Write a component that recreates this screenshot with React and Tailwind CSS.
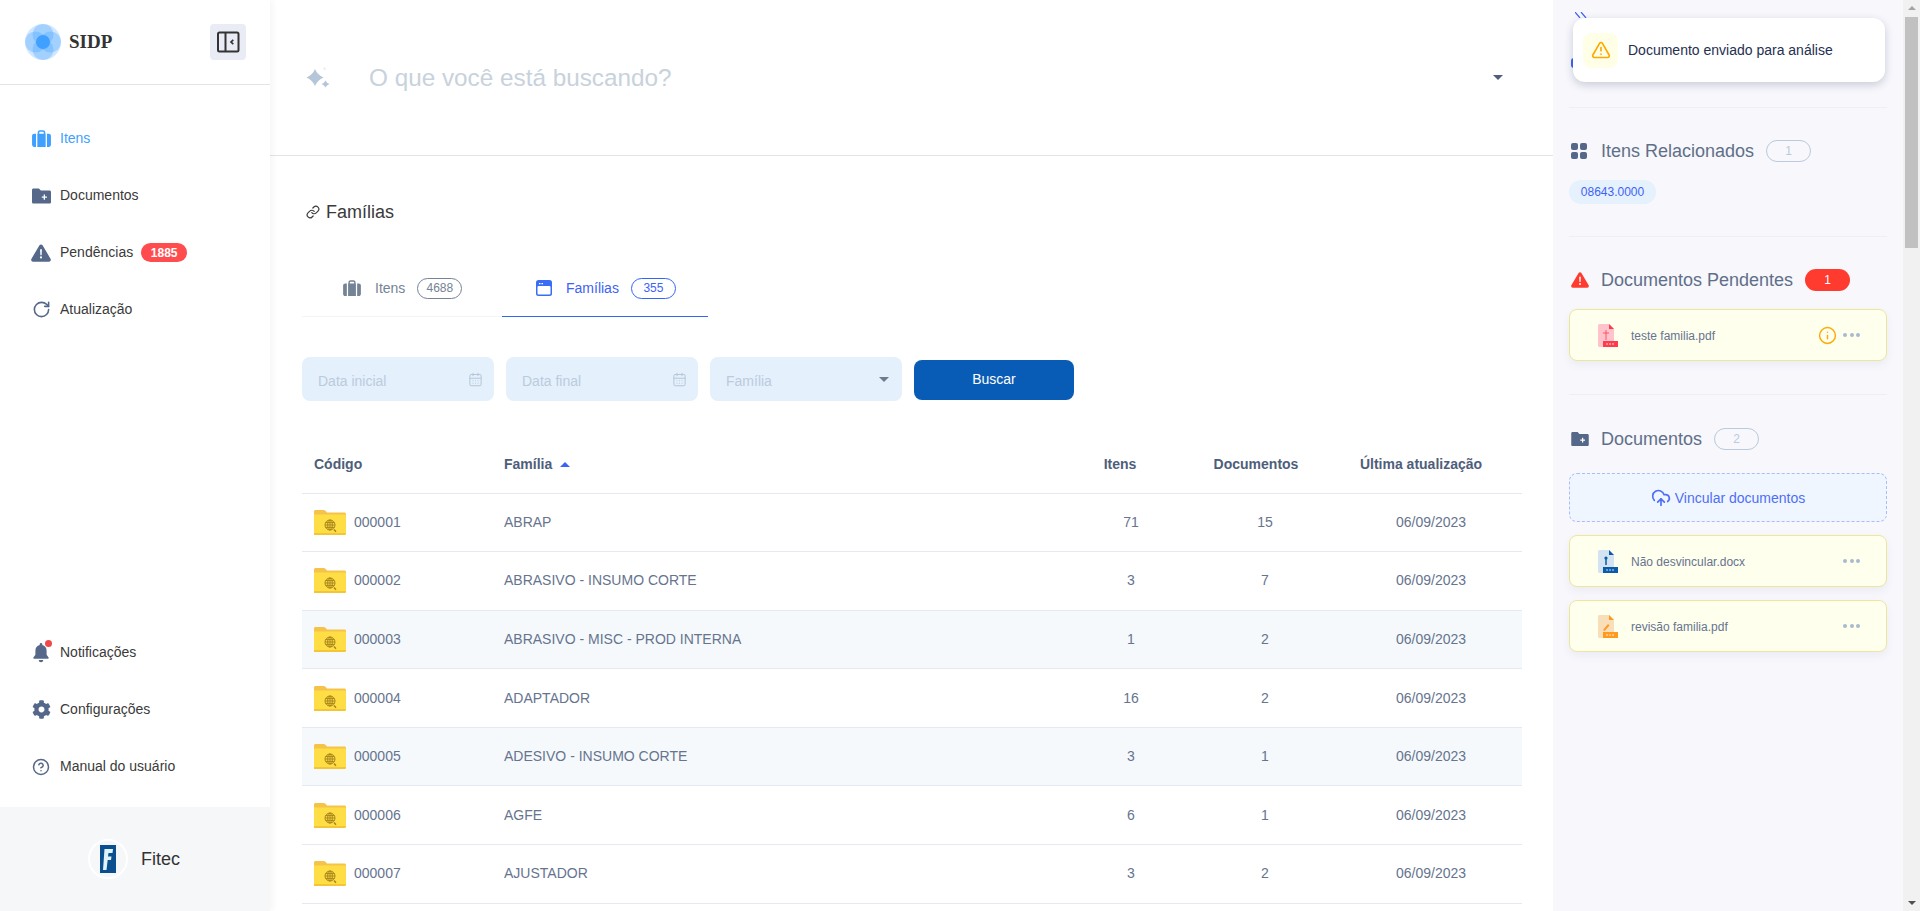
import React from 'react';
import { RotateCw, CircleHelp, Link, CalendarDays, TriangleAlert, Info, CloudUpload } from 'lucide-react';
import { FaCog } from 'react-icons/fa';

const SANS = "font-['Liberation_Sans',Arial,sans-serif]";

const rows = [
  { code: '000001', name: 'ABRAP', items: 71, docs: 15 },
  { code: '000002', name: 'ABRASIVO - INSUMO CORTE', items: 3, docs: 7 },
  { code: '000003', name: 'ABRASIVO - MISC - PROD INTERNA', items: 1, docs: 2, shaded: true },
  { code: '000004', name: 'ADAPTADOR', items: 16, docs: 2 },
  { code: '000005', name: 'ADESIVO - INSUMO CORTE', items: 3, docs: 1, shaded: true },
  { code: '000006', name: 'AGFE', items: 6, docs: 1 },
  { code: '000007', name: 'AJUSTADOR', items: 3, docs: 2 },
];

const BagIcon = ({ className }) => (
  <svg viewBox="0 0 20 18" className={className} fill="currentColor">
    <path d="M6 4V2.600C6 1.200 7 .3 8.300 .3h3.400C13 .3 14 1.200 14 2.600V4h.4v14H5.600V4H6zm1.600 0h4.800V2.700c0-.5-.3-.8-.8-.8H8.400c-.5 0-.8 .3-.8 .8V4z" />
    <path d="M4.200 4v14H2.400C1.100 18 0 17 0 15.700V6.300C0 5 1.100 4 2.400 4h1.800zM15.800 4h1.800C18.900 4 20 5 20 6.300v9.400c0 1.300-1.100 2.300-2.400 2.300h-1.800V4z" />
  </svg>
);

const FolderPlusIcon = ({ className }) => (
  <svg viewBox="0 0 20 16" className={className}>
    <path fill="currentColor" d="M1.500 0h5.800l2 2.200h9.200c.8 0 1.500 .7 1.500 1.500v10.800c0 .8-.7 1.500-1.500 1.500h-17C.7 16 0 15.300 0 14.500v-13C0 .7 .7 0 1.500 0z" />
    <path fill="#fff" d="M12.300 6.500h1.400v2h2v1.400h-2v2h-1.400v-2h-2V8.500h2z" />
  </svg>
);

const WarnIcon = ({ className }) => (
  <svg viewBox="0 0 22 19" className={className}>
    <path fill="currentColor" d="M9.300 1C10 -.2 12 -.2 12.700 1l8.900 15c.7 1.300-.2 3-1.700 3H2.100C.6 19-.3 17.300 .4 16L9.300 1z" />
    <path fill="#fff" d="M10 5.500h2l-.3 6.500h-1.400L10 5.500zM11 13.200a1.200 1.200 0 1 1 0 2.400 1.200 1.200 0 0 1 0-2.400z" />
  </svg>
);

const BellIcon = () => (
  <span className="relative block h-[20px] w-[20px]">
    <svg viewBox="0 0 16 20" className="absolute left-[2px] top-0 h-[20px] w-[16px] text-[#56688a]" fill="currentColor">
      <path d="M8 0c.8 0 1.300 .6 1.300 1.300v.6C12 2.500 13.600 4.700 13.600 7.400v4.400l2 2.700c.4 .5 0 1.200-.6 1.200H1c-.6 0-1-.7-.6-1.200l2-2.700V7.400C2.400 4.700 4 2.500 6.700 1.900v-.6C6.700 .6 7.200 0 8 0zM5.800 17h4.400c0 1.300-1 2.300-2.200 2.300S5.800 18.300 5.800 17z" />
    </svg>
    <span className="absolute left-[14px] top-[-3px] h-[7px] w-[7px] rounded-full bg-[#f04848]" />
  </span>
);

const SidebarToggleIcon = () => (
  <svg viewBox="0 0 24 24" className="h-[24px] w-[24px] text-[#333]" fill="none" stroke="currentColor" strokeWidth="2">
    <rect x="2" y="2.500" width="20.500" height="19" rx="1.500" />
    <path d="M9.500 2.500v19" />
    <path d="M17.300 9.800L15 12l2.300 2.200" strokeWidth="1.700" />
  </svg>
);

const LogoIcon = () => (
  <svg viewBox="0 0 36 36" className="h-[36px] w-[36px]">
    <circle cx="18" cy="18" r="18" fill="#3fa0ff" opacity=".25" />
    <circle cx="10.500" cy="18" r="10.500" fill="#3fa0ff" opacity=".3" />
    <circle cx="25.500" cy="18" r="10.500" fill="#3fa0ff" opacity=".3" />
    <circle cx="18" cy="10.500" r="10.500" fill="#3fa0ff" opacity=".3" />
    <circle cx="18" cy="25.500" r="10.500" fill="#3fa0ff" opacity=".3" />
    <circle cx="18" cy="18" r="7" fill="#3fa0ff" />
  </svg>
);

const FitecLogo = () => (
  <span className="flex h-[40px] w-[40px] items-center justify-center rounded-full border-2 border-white">
    <svg viewBox="0 0 16 28" className="h-[28px] w-[16px]">
      <rect width="16" height="28" fill="#0b4f8e" />
      <path d="M4.500 4H13l-.5 4H8.500L8 11.500h3.500L11 15H7.700L6.500 25H3z" fill="#dff3fb" />
    </svg>
  </span>
);

const SparkIcon = () => (
  <svg viewBox="0 0 24 24" className="h-[24px] w-[24px]" fill="#b4c6d8">
    <path d="M9 3Q11.500 9 17.500 11.500Q11.500 14 9 20Q6.500 14 .5 11.500Q6.500 9 9 3z" />
    <path d="M19.500 14.500Q20.500 17 23.500 18Q20.500 19 19.500 21.500Q18.500 19 15.500 18Q18.500 17 19.500 14.500z" />
    <path d="M18.500 .5c.2 1.300 .8 1.900 2.200 2.200-1.400 .3-2 .9-2.200 2.200-.2-1.300-.8-1.900-2.200-2.200 1.400-.3 2-.9 2.200-2.200z" opacity=".3" />
  </svg>
);

const WindowIcon = () => (
  <svg viewBox="0 0 16 16" className="h-[16px] w-[16px]">
    <rect width="16" height="16" rx="2.500" fill="#3a6cf6" />
    <rect x="1.500" y="6" width="13" height="8.500" rx="1" fill="#fff" />
    <path d="M3 3h1.500v1.200H3zM5.500 3H7v1.200H5.500z" fill="#fff" />
  </svg>
);

const FolderWebIcon = () => (
  <svg viewBox="0 0 32 25" className="h-[25px] w-[32px] shrink-0">
    <path fill="#f5c34b" d="M0 1.500C0 .7 .7 0 1.500 0h8.300c.6 0 1 .2 1.400 .6L13 2.500h17.500c.8 0 1.500 .7 1.500 1.500v4H0z" />
    <path fill="#ffdd45" d="M0 4.500h30.500c.8 0 1.500 .7 1.500 1.500v17.500c0 .8-.7 1.500-1.500 1.500H0z" />
    <path fill="#f4c636" d="M0 23h32v.5c0 .8-.7 1.500-1.500 1.500H0z" />
    <g fill="none" stroke="#a8871c" strokeWidth="1">
      <circle cx="16" cy="15" r="5" />
      <ellipse cx="16" cy="15" rx="2.300" ry="5" />
      <path d="M11 15h10M11.600 12.600h8.800M11.600 17.400h8.800M16 10v10" />
      <path d="M20 19.500l2 2.300" strokeWidth="1.500" />
    </g>
  </svg>
);

// page, folded corner and the coloured type tag of a document
const FileIcon = ({ page, tag, children }) => (
  <svg viewBox="0 0 20 23" className="h-[23px] w-[20px] shrink-0">
    <path fill={page} d="M1.500 0H11l5 5v16.500c0 .8-.7 1.500-1.500 1.500h-13C.7 23 0 22.300 0 21.500v-20C0 .7 .7 0 1.500 0z" />
    <path fill={tag} d="M11 0l5 5h-5z" />
    {children}
    <rect x="5" y="17" width="15" height="6" fill={tag} />
    <path d="M8.500 19h1v2h-1zM11.500 19h1v2h-1zM14.500 19h1v2h-1z" fill="#fff" opacity=".8" />
  </svg>
);

const Dots = () => (
  <span className="flex gap-[2.500px]">
    <i className="h-[4px] w-[4px] rounded-full bg-[#a8bacb]" />
    <i className="h-[4px] w-[4px] rounded-full bg-[#a8bacb]" />
    <i className="h-[4px] w-[4px] rounded-full bg-[#a8bacb]" />
  </span>
);

const NavItem = ({ icon, label, active, badge }) => (
  <div className={`flex h-[57px] items-center gap-[9px] pl-[31px] text-[14px] ${active ? 'text-[#3fa0ff]' : 'text-[#3a3a3a]'}`}>
    <span className={`flex h-[20px] w-[20px] items-center justify-center ${active ? 'text-[#3fa0ff]' : 'text-[#56688a]'}`}>{icon}</span>
    <span>{label}</span>
    {badge && <span className="ml-[-1px] flex h-[19px] w-[46px] items-center justify-center rounded-full bg-[#ff4d4f] text-[12px] font-bold text-white">{badge}</span>}
  </div>
);

const Sidebar = () => (
  <aside className="relative z-10 flex w-[270px] shrink-0 flex-col bg-white shadow-[3px_0_6px_rgba(0,0,0,0.04)]">
    <div className="flex h-[85px] items-center justify-between border-b border-[#e2e4e8] pl-[25px] pr-[24px]">
      <div className="flex items-center gap-[8px]">
        <LogoIcon />
        <span className="font-['Liberation_Serif',serif] text-[19px] font-bold text-[#333]">SIDP</span>
      </div>
      <button className="flex h-[36px] w-[36px] items-center justify-center rounded bg-[#e9ecf5]">
        <SidebarToggleIcon />
      </button>
    </div>
    <nav className="mt-[25px]">
      <NavItem active label="Itens" icon={<BagIcon className="h-[17px] w-[19px]" />} />
      <NavItem label="Documentos" icon={<FolderPlusIcon className="h-[16px] w-[19px]" />} />
      <NavItem label="Pendências" badge="1885" icon={<WarnIcon className="h-[18px] w-[21px]" />} />
      <NavItem label="Atualização" icon={<RotateCw size={19} strokeWidth={2} />} />
    </nav>
    <div className="flex-1" />
    <nav className="mb-[12px]">
      <NavItem label="Notificações" icon={<BellIcon />} />
      <NavItem label="Configurações" icon={<FaCog size={19} />} />
      <NavItem label="Manual do usuário" icon={<CircleHelp size={18} strokeWidth={2} />} />
    </nav>
    <div className="flex h-[104px] items-center justify-center gap-[13px] bg-[#f6f7f9] pr-[2px] text-[18px] text-[#333]">
      <FitecLogo />
      <span>Fitec</span>
    </div>
  </aside>
);

const Tab = ({ icon, label, count, active, className }) => (
  <div className={`flex h-[57px] items-center border-b text-[14px] ${className} ${active ? 'border-[#3366f5] text-[#3d63f5]' : 'border-[#f2f4f7] text-[#748395]'}`}>
    {icon}
    <span className="ml-[14px]">{label}</span>
    <span className={`ml-[12px] flex h-[21px] w-[45px] items-center justify-center rounded-full border text-[12px] ${active ? 'border-[#3366f5]' : 'border-[#748395]'}`}>{count}</span>
  </div>
);

const DateField = ({ label }) => (
  <div className="flex h-[44px] w-[192px] items-center justify-between rounded-lg bg-[#e4f0fc] pl-[16px] pr-[11px] text-[14px] text-[#bccbdc]">
    <span className="pt-[4px]">{label}</span>
    <CalendarDays size={15} strokeWidth={1.600} className="text-[#b5c6d6]" />
  </div>
);

const Main = () => (
  <main className="flex w-[1283px] shrink-0 flex-col bg-white">
    <div className="flex h-[156px] items-center border-b border-[#e2e4e8] pl-[36px] pr-[50px]">
      <SparkIcon />
      <span className="ml-[39px] pt-[1px] text-[24.300px] text-[#c8d2dc]">O que você está buscando?</span>
      <span className="ml-auto h-0 w-0 border-x-[5px] border-t-[5px] border-x-transparent border-t-[#4e5f7d]" />
    </div>
    <div className="pl-[32px] pr-[30px]">
      <div className="mt-[44px] flex h-[24px] items-center gap-[6px] pl-[4px] text-[18px] text-[#3a3a3a]">
        <Link size={14} strokeWidth={2} />
        <span>Famílias</span>
      </div>
      <div className="mt-[36px] flex">
        <Tab className="w-[200px] pl-[41px]" label="Itens" count="4688" icon={<BagIcon className="h-[16px] w-[18px]" />} />
        <Tab className="w-[206px] pl-[34px]" active label="Famílias" count="355" icon={<WindowIcon />} />
      </div>
      <div className="mt-[40px] flex items-center gap-[12px]">
        <DateField label="Data inicial" />
        <DateField label="Data final" />
        <div className="flex h-[44px] w-[192px] items-center justify-between rounded-lg bg-[#e4f0fc] pl-[16px] pr-[13px] text-[14px] text-[#bccbdc]">
          <span className="pt-[4px]">Família</span>
          <span className="h-0 w-0 border-x-[5px] border-t-[5px] border-x-transparent border-t-[#6f7b8c]" />
        </div>
        <button className="mt-[1px] h-[40px] w-[160px] rounded-lg bg-[#095cb5] text-[14px] text-white">Buscar</button>
      </div>
      <table className="mt-[35px] w-[1220px] table-fixed border-collapse text-[14px] text-[#66748e]">
        <colgroup>
          <col className="w-[190px]" />
          <col className="w-[572px]" />
          <col className="w-[132px]" />
          <col className="w-[138px]" />
          <col className="w-[188px]" />
        </colgroup>
        <thead>
          <tr className="h-[57px] border-b border-[#e6e9f2] font-bold text-[#4e5e7a]">
            <th className="pl-[12px] pt-[1px] text-left">Código</th>
            <th className="pl-[12px] pt-[1px] text-left">
              Família
              <span className="ml-[8px] inline-block h-0 w-0 -translate-y-[2px] border-x-[5px] border-b-[5px] border-x-transparent border-b-[#3d63f5]" />
            </th>
            <th className="pr-[20px] pt-[1px] text-center">Itens</th>
            <th className="pr-[18px] pt-[1px] text-center">Documentos</th>
            <th className="pr-[14px] pt-[1px] text-center">Última atualização</th>
          </tr>
        </thead>
        <tbody>
          {rows.map((row) => (
            <tr key={row.code} className={`h-[58.600px] border-b border-[#e6e9f2] ${row.shaded ? 'bg-[#f5f9fc]' : ''}`}>
              <td className="pl-[12px]">
                <div className="flex items-center gap-[8px]">
                  <FolderWebIcon />
                  <span>{row.code}</span>
                </div>
              </td>
              <td className="pl-[12px]">{row.name}</td>
              <td className="pl-[2px] text-center">{row.items}</td>
              <td className="text-center">{row.docs}</td>
              <td className="pl-[6px] text-center">06/09/2023</td>
            </tr>
          ))}
        </tbody>
      </table>
    </div>
  </main>
);

const SectionTitle = ({ icon, label, pill, pillClass }) => (
  <div className="flex h-[24px] items-center text-[18px] text-[#606f89]">
    <span className="flex w-[32px] items-center pl-[2px]">{icon}</span>
    <span>{label}</span>
    <span className={`ml-[12px] flex h-[22px] w-[45px] items-center justify-center rounded-full text-[12px] ${pillClass}`}>{pill}</span>
  </div>
);

const DocCard = ({ name, file, extra }) => (
  <div className="flex h-[52px] items-center rounded-lg border border-[#eee79a] bg-[#ffffee] pl-[28px] pr-[26px] text-[12px] text-[#66748e] shadow-[0_4px_8px_rgba(80,90,140,0.07)]">
    {file}
    <span className="ml-[13px] pt-[1px]">{name}</span>
    <span className="ml-auto flex items-center gap-[6px]">
      {extra}
      <Dots />
    </span>
  </div>
);

const RightPanel = () => (
  <section className="relative w-[350px] shrink-0 bg-[#f7f7fc] px-[16px]">
    <div className="relative h-[108px] border-b border-[#eeeef4]">
      <svg viewBox="0 0 12 6" className="absolute left-[6px] top-[12px] h-[6px] w-[12px]" fill="none" stroke="#3d63f5" strokeWidth="1.200">
        <path d="M0 0l5 6M6 0l5 6" />
      </svg>
      <span className="absolute left-[2px] top-[58px] h-[10px] w-[6px] rounded-sm bg-[#3d63f5]" />
      <div className="absolute left-[4px] top-[18px] flex h-[64px] w-[312px] items-center gap-[10px] rounded-xl bg-white pl-[10px] text-[14px] text-[#25304f] shadow-[0_3px_8px_rgba(40,50,80,0.22)]">
        <span className="flex h-[35px] w-[35px] items-center justify-center rounded-lg bg-[#ffffe8]">
          <TriangleAlert size={20} strokeWidth={2} className="text-[#ffa800]" />
        </span>
        <span>Documento enviado para análise</span>
      </div>
    </div>
    <div className="border-b border-[#eeeef4] pb-[32px] pt-[31px]">
      <SectionTitle
        label="Itens Relacionados"
        pill="1"
        pillClass="border border-[#b9cbdc] text-[#b9cbdc]"
        icon={
          <svg viewBox="0 0 16 16" className="h-[16px] w-[16px]" fill="#56688a">
            <rect width="7" height="7" rx="2" />
            <rect x="9" width="7" height="7" rx="2" />
            <rect y="9" width="7" height="7" rx="2" />
            <rect x="9" y="9" width="7" height="7" rx="2" />
          </svg>
        }
      />
      <span className="mt-[17px] flex h-[24px] w-[87px] items-center justify-center rounded-full bg-[#e6f1fe] text-[12px] text-[#3d63f5]">08643.0000</span>
    </div>
    <div className="border-b border-[#eeeef4] pb-[33px] pt-[31px]">
      <SectionTitle
        label="Documentos Pendentes"
        pill="1"
        pillClass="bg-[#ff3b30] text-white"
        icon={<span className="text-[#ff3b30]"><WarnIcon className="h-[16px] w-[18px]" /></span>}
      />
      <div className="mt-[17px]">
        <DocCard
          name="teste familia.pdf"
          file={
            <FileIcon page="#ffc4cb" tag="#ff3b4e">
              <path d="M8 6v10M5 9h6" stroke="#ff3b4e" strokeWidth=".8" />
            </FileIcon>
          }
          extra={<Info size={19} strokeWidth={1.800} className="text-[#ffa800]" />}
        />
      </div>
    </div>
    <div className="pt-[32px]">
      <SectionTitle
        label="Documentos"
        pill="2"
        pillClass="border border-[#b9cbdc] text-[#b9cbdc]"
        icon={<span className="text-[#56688a]"><FolderPlusIcon className="h-[14px] w-[18px]" /></span>}
      />
      <div className="mt-[22px] flex flex-col gap-[13px]">
        <div className="flex h-[49px] items-center justify-center gap-[4px] rounded-lg border border-dashed border-[#a9bdfc] bg-[#f0f6ff] text-[14px] text-[#4d6ff5]">
          <CloudUpload size={20} strokeWidth={2} />
          <span className="pt-[1px]">Vincular documentos</span>
        </div>
        <DocCard
          name="Não desvincular.docx"
          file={
            <FileIcon page="#d3e3f1" tag="#0b5ba8">
              <path d="M8 8v7" stroke="#0b5ba8" strokeWidth="1.500" />
              <circle cx="8" cy="8" r="1.600" fill="#0b5ba8" />
            </FileIcon>
          }
        />
        <DocCard
          name="revisão familia.pdf"
          file={
            <FileIcon page="#f8dfba" tag="#ff9a1f">
              <path d="M5 15l5-6 1.500 1.500-5 5.500z" fill="#ff9a1f" />
            </FileIcon>
          }
        />
      </div>
    </div>
  </section>
);

const FakeScrollbar = () => (
  <div className="relative flex w-[17px] shrink-0 flex-col items-center bg-[#f1f1f1]">
    <span className="mt-[6px] h-0 w-0 border-x-[4px] border-b-[4px] border-x-transparent border-b-[#a3a3a3]" />
    <span className="mt-[7px] h-[231px] w-[13px] bg-[#c1c1c1]" />
    <span className="mb-[6px] mt-auto h-0 w-0 border-x-[4px] border-t-[4px] border-x-transparent border-t-[#505050]" />
  </div>
);

export default function App() {
  return (
    <div className={`flex h-[911px] w-[1920px] overflow-hidden ${SANS}`}>
      <Sidebar />
      <Main />
      <RightPanel />
      <FakeScrollbar />
    </div>
  );
}
